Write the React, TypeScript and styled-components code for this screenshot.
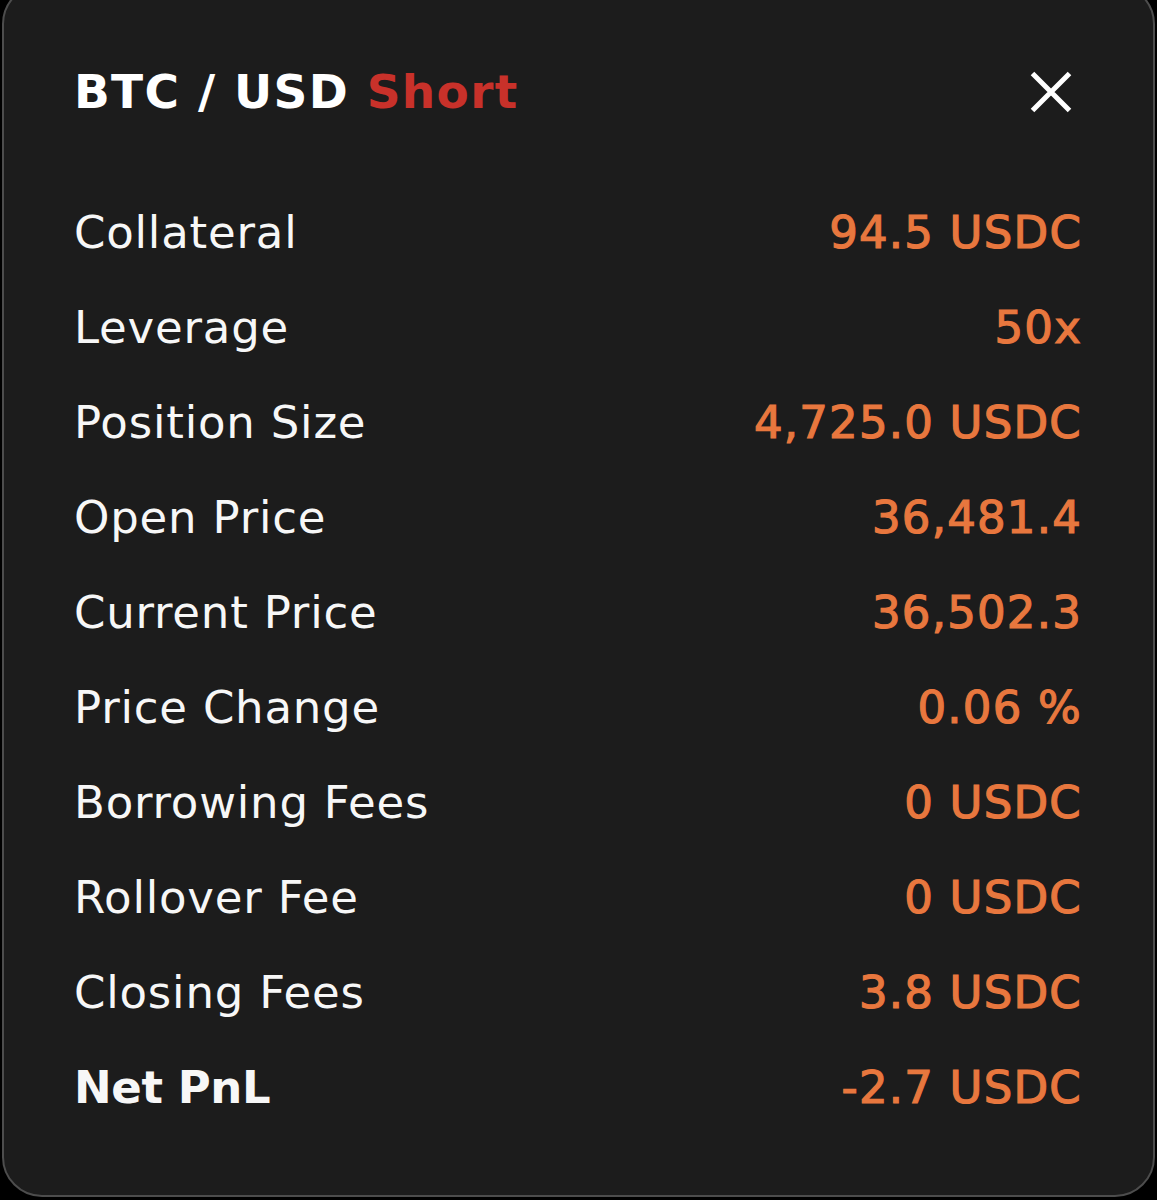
import React from "react";
import styled, { createGlobalStyle } from "styled-components";

const Global = createGlobalStyle`
  html, body {
    margin: 0;
    padding: 0;
    background: #000;
  }
  body {
    font-family: "DejaVu Sans", "Liberation Sans", sans-serif;
    overflow: hidden;
  }
`;

const Page = styled.div`
  width: 1157px;
  height: 1200px;
  overflow: hidden;
  background: #000;
`;

const Panel = styled.section`
  margin: -16px 2px 0 2px;
  height: 1213px;
  box-sizing: border-box;
  border: 2px solid #4d4d4d;
  border-radius: 40px;
  background: #1c1c1c;
  padding: 58px 71px 60px 70px;
  display: flex;
  flex-direction: column;
`;

const Header = styled.header`
  height: 95px;
  display: flex;
  align-items: center;
  justify-content: space-between;
  margin-bottom: 46px;
`;

const Title = styled.h1`
  margin: 0;
  font-family: "DejaVu Sans", sans-serif;
  font-weight: 700;
  font-size: 47px;
  letter-spacing: 1.3px;
  color: #ffffff;
  line-height: 95px;
`;

const Side = styled.span`
  color: #c8312a;
`;

const CloseButton = styled.button`
  width: 42px;
  height: 42px;
  padding: 0;
  margin-right: 10px;
  border: none;
  background: transparent;
  display: flex;
  align-items: center;
  justify-content: center;
  cursor: pointer;
`;

const List = styled.dl`
  margin: 0;
  display: flex;
  flex-direction: column;
`;

const Row = styled.div`
  height: 95px;
  display: flex;
  align-items: center;
  justify-content: space-between;
`;

const Label = styled.dt<{ $strong?: boolean }>`
  margin: 0;
  font-size: 45px;
  line-height: 95px;
  letter-spacing: ${(p) => (p.$strong ? "-0.4px" : "0.8px")};
  font-weight: ${(p) => (p.$strong ? 700 : 400)};
  color: #f7f7f7;
`;

const Value = styled.dd`
  margin: 0;
  font-size: 45px;
  line-height: 95px;
  letter-spacing: 1.2px;
  font-weight: 400;
  color: #e8773e;
  -webkit-text-stroke: 1.2px #e8773e;
`;

const rows: { label: string; value: string; strong?: boolean }[] = [
  { label: "Collateral", value: "94.5 USDC" },
  { label: "Leverage", value: "50x" },
  { label: "Position Size", value: "4,725.0 USDC" },
  { label: "Open Price", value: "36,481.4" },
  { label: "Current Price", value: "36,502.3" },
  { label: "Price Change", value: "0.06 %" },
  { label: "Borrowing Fees", value: "0 USDC" },
  { label: "Rollover Fee", value: "0 USDC" },
  { label: "Closing Fees", value: "3.8 USDC" },
  { label: "Net PnL", value: "-2.7 USDC", strong: true },
];

export default function App() {
  return (
    <Page>
      <Global />
      <Panel>
        <Header>
          <Title>
            BTC / USD <Side>Short</Side>
          </Title>
          <CloseButton aria-label="Close">
            <svg width="42" height="42" viewBox="0 0 42 42">
              <path
                d="M2.5 2.5 L39.5 39.5 M39.5 2.5 L2.5 39.5"
                stroke="#ffffff"
                strokeWidth="5"
                strokeLinecap="butt"
                fill="none"
              />
            </svg>
          </CloseButton>
        </Header>
        <List>
          {rows.map((r) => (
            <Row key={r.label}>
              <Label $strong={r.strong}>{r.label}</Label>
              <Value>{r.value}</Value>
            </Row>
          ))}
        </List>
      </Panel>
    </Page>
  );
}
